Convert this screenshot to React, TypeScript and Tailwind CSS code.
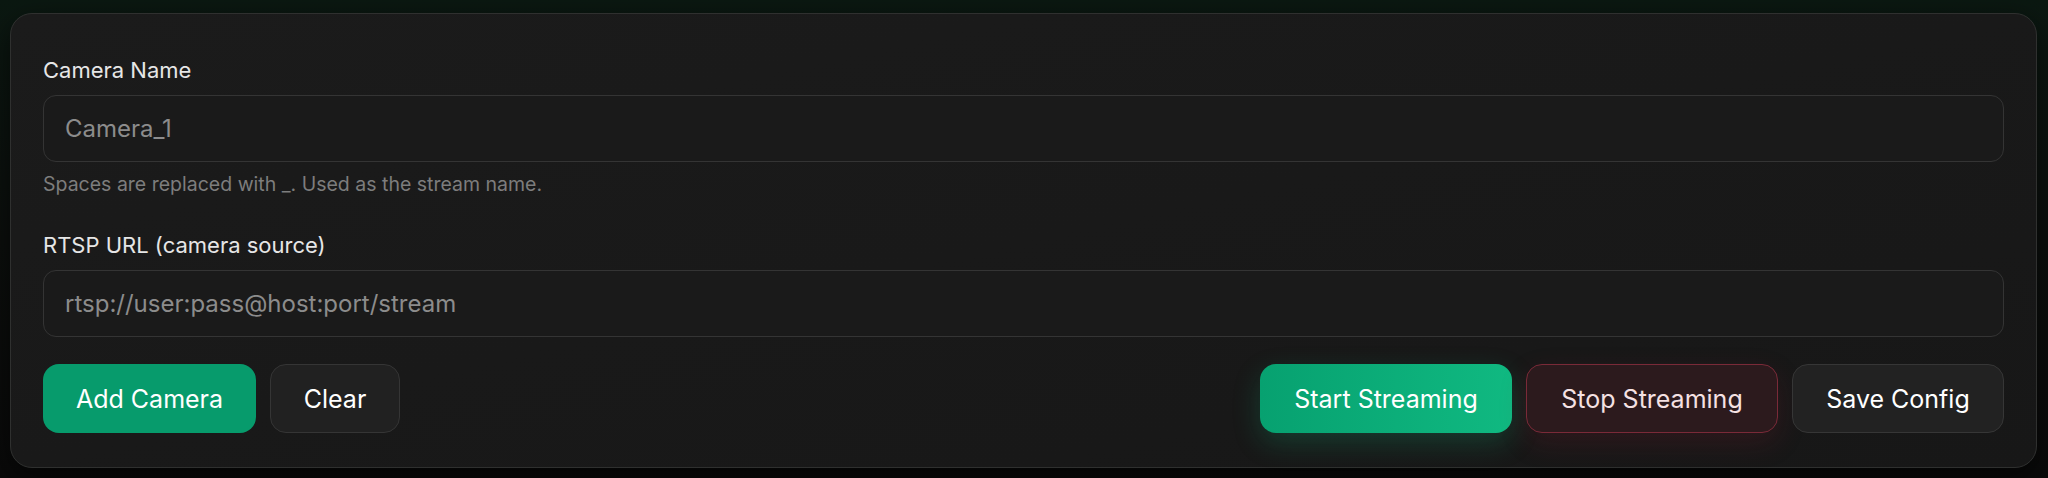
import React from "react";

const font = { fontFamily: "Inter, 'Noto Sans', sans-serif" };

function Field({
  label,
  placeholder,
  hint,
}: {
  label: string;
  placeholder: string;
  hint?: string;
}) {
  return (
    <div className="flex flex-col">
      <label className="text-[22px] leading-[31px] text-[#e6e6e6]">{label}</label>
      <input
        placeholder={placeholder}
        className="mt-[9px] h-[67px] w-full rounded-[13px] border border-[#343434] bg-[#1a1a1a] px-[21px] text-[24px] text-[#e6e6e6] outline-none placeholder:text-[#8c8c8c]"
        style={font}
      />
      {hint && <p className="mt-[9px] text-[19.5px] leading-[26px] text-[#7d7d7d]">{hint}</p>}
    </div>
  );
}

export default function App() {
  return (
    <div
      className="h-[478px] w-full bg-gradient-to-b from-[#0b1811] via-[#0c0f0d] to-[#0a0a0a] pt-[13px]"
      style={font}
    >
      <div className="ml-[10px] mr-[11px] rounded-[22px] border border-[#2f302f] bg-gradient-to-br from-[#1b1b1b] to-[#171717] px-[32px] pt-[41px] pb-[34px] shadow-[0_10px_30px_rgba(0,0,0,0.6)]">
        <Field
          label="Camera Name"
          placeholder="Camera_1"
          hint="Spaces are replaced with _. Used as the stream name."
        />
        <div className="mt-[33px]">
          <Field label="RTSP URL (camera source)" placeholder="rtsp://user:pass@host:port/stream" />
        </div>
        <div className="mt-[27px] flex items-center justify-between">
          <div className="flex gap-[14px]">
            <button className="h-[69px] w-[213px] rounded-[16px] bg-[#079b6c] pt-[3px] text-[25px] text-white">
              Add Camera
            </button>
            <button className="h-[69px] w-[130px] rounded-[16px] border border-[#353535] bg-[#212121] pt-[3px] text-[25px] text-white">
              Clear
            </button>
          </div>
          <div className="flex gap-[14px]">
            <button className="h-[69px] w-[252px] rounded-[16px] bg-gradient-to-r from-[#07a170] to-[#10b981] pt-[3px] text-[25px] text-white shadow-[0_10px_28px_rgba(16,185,129,0.22)]">
              Start Streaming
            </button>
            <button className="h-[69px] w-[252px] rounded-[16px] border border-[#7a2a38] bg-[#2c1a1d] pt-[3px] text-[25px] text-[#f5e1e3] shadow-[0_10px_28px_rgba(150,30,50,0.18)]">
              Stop Streaming
            </button>
            <button className="h-[69px] w-[212px] rounded-[16px] border border-[#363636] bg-[#222222] pt-[3px] text-[25px] text-white">
              Save Config
            </button>
          </div>
        </div>
      </div>
    </div>
  );
}
